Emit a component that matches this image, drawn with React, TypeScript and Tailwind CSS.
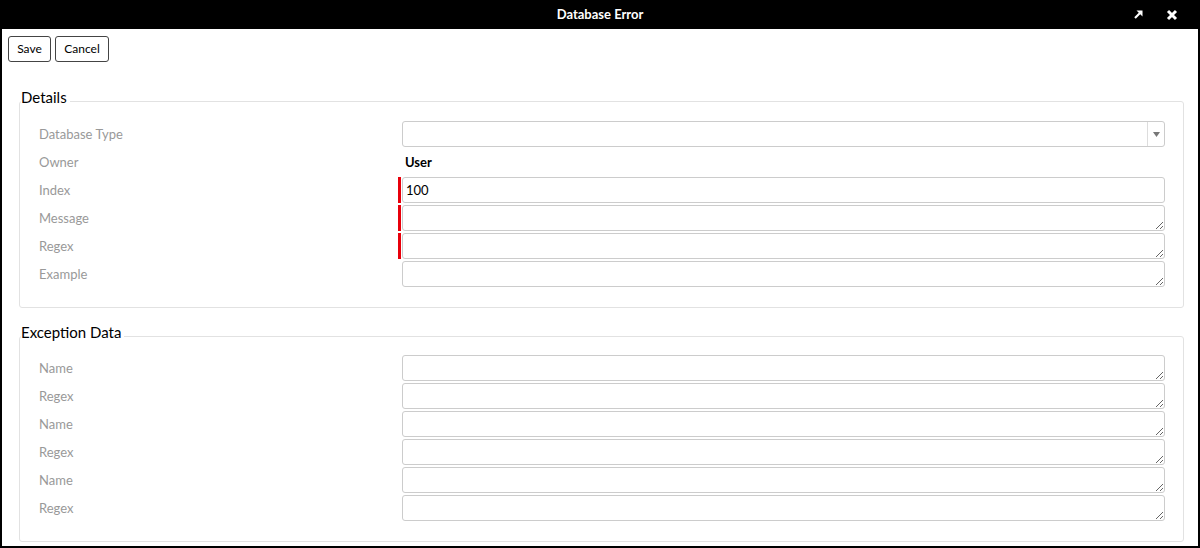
import React from "react";

const font = { fontFamily: "Lato, 'Noto Sans', sans-serif" };

const Label = ({ text }: { text: string }) => (
  <div className="w-[359px] shrink-0 text-[13px] text-[#999] leading-[26px]">{text}</div>
);

const Marker = ({ on }: { on?: boolean }) => (
  <div className="w-[4px] shrink-0 h-[26px]">
    {on && <div className="w-[3px] h-[26px] bg-[#e8000b]" />}
  </div>
);

const Area = ({ required }: { required?: boolean }) => (
  <div className="flex items-start h-[26px]">
    <Marker on={required} />
    <textarea
      rows={1}
      className="flex-1 h-[26px] min-h-[26px] border border-[#ccc] rounded-[3px] bg-white outline-none text-[13px] px-[3px]"
    />
  </div>
);

const Row = ({ label, children }: { label: string; children: React.ReactNode }) => (
  <div className="flex h-[26px]">
    <Label text={label} />
    <div className="flex-1">{children}</div>
  </div>
);

const Section = ({ title, children, className }: { title: string; children: React.ReactNode; className?: string }) => (
  <fieldset className={"ml-[17px] mr-[14px] border border-[#e2e2e2] rounded-[3px] " + (className ?? "")}>
    <legend className="ml-[1px] pr-[3px] pb-[8px] text-[15px] leading-[17px] text-black">{title}</legend>
    <div className="flex flex-col gap-[2px] pl-[19px] pr-[18px]">{children}</div>
  </fieldset>
);

export default function App() {
  return (
    <div style={font} className="w-[1200px] h-[548px] bg-white border-x-2 border-b-2 border-black flex flex-col overflow-hidden">
      <div className="h-[29px] bg-black shrink-0 flex items-center justify-center relative">
        <span className="text-white font-bold text-[13px]">Database Error</span>
        <div className="absolute right-[20px] top-0 h-full flex items-center gap-[22px]">
          <svg width="11" height="11" viewBox="0 0 11 11">
            <path d="M2 9 L8.5 2.5" stroke="white" strokeWidth="2.2" />
            <path d="M3.5 1.5 H9.5 V7.5 Z" fill="white" />
          </svg>
          <svg width="12" height="12" viewBox="0 0 12 12">
            <path d="M2 2 L10 10 M10 2 L2 10" stroke="white" strokeWidth="3" />
          </svg>
        </div>
      </div>

      <div className="flex gap-[4px] pl-[6px] pt-[7px]">
        <button className="h-[26px] w-[43px] border border-[#444] rounded-[3px] text-[12px] text-black bg-white">Save</button>
        <button className="h-[26px] w-[54px] border border-[#444] rounded-[3px] text-[12px] text-black bg-white">Cancel</button>
      </div>

      <Section title="Details" className="mt-[27px] pt-[7px] pb-[20px]">
        <Row label="Database Type">
          <div className="flex">
            <Marker />
            <div className="flex-1 h-[26px] border border-[#ccc] rounded-[3px] flex justify-end">
              <div className="w-[17px] border-l border-[#ddd] flex items-center justify-center">
                <svg width="7" height="5" viewBox="0 0 7 5">
                  <path d="M0 0 H7 L3.5 5 Z" fill="#777" />
                </svg>
              </div>
            </div>
          </div>
        </Row>
        <Row label="Owner">
          <div className="pl-[7px] text-[13px] font-bold text-black leading-[26px]">User</div>
        </Row>
        <Row label="Index">
          <div className="flex">
            <Marker on />
            <div className="flex-1 h-[26px] border border-[#ccc] rounded-[3px] px-[3px] text-[13px] leading-[24px] text-black">100</div>
          </div>
        </Row>
        <Row label="Message"><Area required /></Row>
        <Row label="Regex"><Area required /></Row>
        <Row label="Example"><Area /></Row>
      </Section>

      <Section title="Exception Data" className="mt-[16px] pt-[6px] pb-[20px]">
        <Row label="Name"><Area /></Row>
        <Row label="Regex"><Area /></Row>
        <Row label="Name"><Area /></Row>
        <Row label="Regex"><Area /></Row>
        <Row label="Name"><Area /></Row>
        <Row label="Regex"><Area /></Row>
      </Section>
    </div>
  );
}
